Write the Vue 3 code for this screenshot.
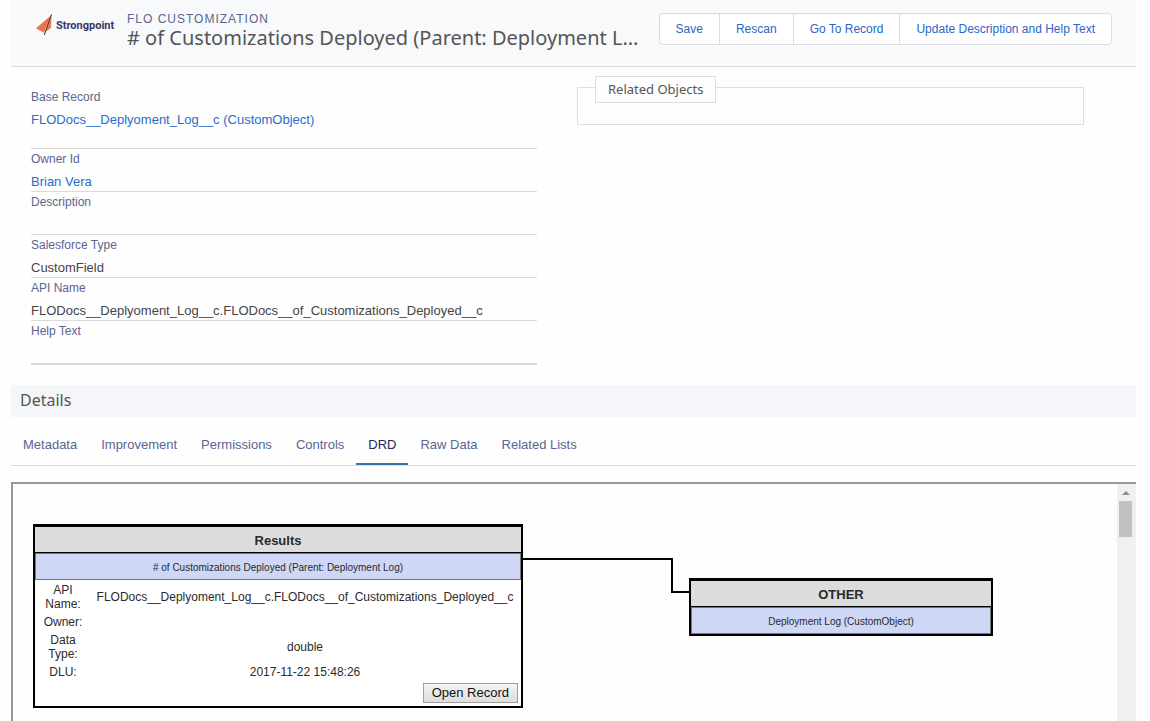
<script setup>
import { ref } from 'vue'

const actions = ['Save', 'Rescan', 'Go To Record', 'Update Description and Help Text']

const fields = [
  { label: 'Base Record', value: 'FLODocs__Deplyoment_Log__c (CustomObject)', link: true, tall: true },
  { label: 'Owner Id', value: 'Brian Vera', link: true },
  { label: 'Description', value: '' },
  { label: 'Salesforce Type', value: 'CustomField' },
  { label: 'API Name', value: 'FLODocs__Deplyoment_Log__c.FLODocs__of_Customizations_Deployed__c' },
  { label: 'Help Text', value: '' },
]

const tabs = ['Metadata', 'Improvement', 'Permissions', 'Controls', 'DRD', 'Raw Data', 'Related Lists']
const activeTab = ref('DRD')

const results = [
  { label: 'API Name:', value: 'FLODocs__Deplyoment_Log__c.FLODocs__of_Customizations_Deployed__c' },
  { label: 'Owner:', value: '' },
  { label: 'Data Type:', value: 'double' },
  { label: 'DLU:', value: '2017-11-22 15:48:26' },
]
</script>

<template>
  <div class="page">
    <header class="header">
      <div class="logo">
        <svg class="logo-mark" viewBox="0 0 18 22" aria-hidden="true">
          <path d="M16.500 1 L1 14.300 L8.800 18.500 Z" fill="#ec7546" />
          <path d="M16.500 1 L16 13.800 L9 19 Z" fill="#e07a52" />
          <path d="M16.500 0.300 L9.300 21" stroke="#4a3440" stroke-width="1" fill="none" />
        </svg>
        <span class="logo-name">Strongpoint</span>
      </div>
      <div class="heading">
        <p class="kicker">FLO CUSTOMIZATION</p>
        <h1 class="title"># of Customizations Deployed (Parent: Deployment L...</h1>
      </div>
      <div class="actions">
        <button v-for="a in actions" :key="a" type="button" class="action">{{ a }}</button>
      </div>
    </header>

    <section class="record">
      <dl class="fields">
        <div v-for="f in fields" :key="f.label" class="field" :class="{ tall: f.tall }">
          <dt>{{ f.label }}</dt>
          <dd>
            <a v-if="f.link" href="#">{{ f.value }}</a>
            <template v-else>{{ f.value }}</template>
          </dd>
        </div>
      </dl>
      <fieldset class="related">
        <legend>Related Objects</legend>
      </fieldset>
    </section>

    <h2 class="section-title">Details</h2>

    <nav class="tabs" role="tablist">
      <button
        v-for="t in tabs"
        :key="t"
        type="button"
        role="tab"
        class="tab"
        :class="{ active: t === activeTab }"
        :aria-selected="t === activeTab"
        @click="activeTab = t"
      >{{ t }}</button>
    </nav>

    <div class="frame">
      <div class="canvas">
        <svg class="connector" width="168" height="36" aria-hidden="true">
          <path d="M0 1 H150 V34 H168" fill="none" stroke="#000" stroke-width="2" />
        </svg>

        <article class="node results">
          <h3>Results</h3>
          <p class="node-sub"># of Customizations Deployed (Parent: Deployment Log)</p>
          <table>
            <tbody>
              <tr v-for="r in results" :key="r.label">
                <th scope="row">{{ r.label }}</th>
                <td>{{ r.value }}</td>
              </tr>
            </tbody>
          </table>
          <div class="node-foot">
            <button type="button" class="open">Open Record</button>
          </div>
        </article>

        <article class="node other">
          <h3>OTHER</h3>
          <p class="node-sub">Deployment Log (CustomObject)</p>
        </article>
      </div>
      <div class="scrollbar" aria-hidden="true">
        <svg class="arrow" viewBox="0 0 8 4"><path d="M4 0 L8 4 H0 Z" fill="#8f8f8f" /></svg>
        <div class="thumb"></div>
      </div>
    </div>
  </div>
</template>

<style>
body {
  margin: 0;
  background: #fefefe;
}
</style>

<style scoped>
.page {
  box-sizing: border-box;
  display: flex;
  flex-direction: column;
  height: 100vh;
  padding: 0 14px 0 11px;
  overflow: hidden;
  font-family: "Liberation Sans", Arial, sans-serif;
  font-size: 13px;
  color: #444;
}
h1, h2, h3, p, dl, dd {
  margin: 0;
  font-weight: 400;
}
button {
  font-family: inherit;
  cursor: pointer;
}
a {
  color: #2a6cc8;
  text-decoration: none;
}

.header {
  flex: none;
  display: flex;
  align-items: flex-start;
  box-sizing: border-box;
  height: 67px;
  padding: 12px 24px 0 24px;
  background: #f7f9fb;
  border-bottom: 1px solid #d9dbe0;
}
.logo {
  flex: none;
  display: flex;
  align-items: center;
  gap: 3px;
  width: 92px;
  padding-top: 2px;
}
.logo-mark {
  width: 18px;
  height: 22px;
}
.logo-name {
  font-family: Roboto, sans-serif;
  font-size: 11px;
  font-weight: 700;
  color: #3a3768;
}
.heading {
  flex: 1;
  min-width: 0;
}
.kicker {
  font-size: 12px;
  line-height: 14px;
  letter-spacing: 1px;
  color: #5b6591;
}
.title {
  white-space: nowrap;
  font-family: "Noto Sans", sans-serif;
  font-size: 20px;
  line-height: 24px;
  color: #555;
}
.actions {
  flex: none;
  display: flex;
  margin-top: 1px;
  background: #fff;
  border: 1px solid #d9dbe0;
  border-radius: 4px;
}
.action {
  height: 30px;
  padding: 0 16px;
  background: none;
  border: 0;
  font-size: 12px;
  color: #2a67c4;
}
.action + .action {
  border-left: 1px solid #d9dbe0;
}

.record {
  flex: none;
  display: grid;
  grid-template-columns: 1fr 1fr;
  gap: 41px;
  padding: 20px 52px 20px 20px;
}
.field {
  box-sizing: border-box;
  height: 43px;
  border-bottom: 1px solid #dddbda;
}
.field.tall {
  height: 62px;
}
.field:last-child {
  height: 44px;
  border-bottom-width: 2px;
}
.field dt {
  padding-top: 2px;
  font-size: 12px;
  line-height: 16px;
  color: #5b6591;
}
.field dd {
  padding-top: 6px;
  line-height: 18px;
}
.related {
  align-self: start;
  box-sizing: border-box;
  height: 38px;
  min-width: 0;
  margin: 0 0 0 -1px;
  padding: 0 17px;
  border: 1px solid #dcdfe0;
}
.related legend {
  float: left;
  margin-top: -12px;
  padding: 0 12px;
  background: #fefefe;
  border: 1px solid #dcdfe0;
  font-family: "Noto Sans", sans-serif;
  font-size: 13px;
  line-height: 25px;
  color: #555;
}

.section-title {
  flex: none;
  height: 32px;
  padding: 0 9px;
  background: #f4f6f9;
  font-family: "Noto Sans", sans-serif;
  font-size: 16px;
  line-height: 30px;
  color: #555;
}
.tabs {
  flex: none;
  display: flex;
  height: 48px;
  border-bottom: 1px solid #d9dbe0;
}
.tab {
  padding: 8px 12px 0;
  background: none;
  border: 0;
  border-bottom: 2px solid transparent;
  font-size: 13px;
  color: #5b6591;
}
.tab.active {
  border-bottom-color: #3a6fae;
  color: #24284e;
}

.frame {
  flex: 1;
  min-height: 0;
  display: flex;
  margin-top: 16px;
  border: 2px solid #989898;
  border-right: 0;
  border-bottom: 0;
}
.canvas {
  position: relative;
  flex: 1;
  overflow: hidden;
}
.connector {
  position: absolute;
  left: 509px;
  top: 74px;
}
.node {
  position: absolute;
  box-sizing: border-box;
  background: #fff;
  border: 2px solid #000;
  border-top-width: 3px;
  text-align: center;
  color: #2a2a2a;
}
.results {
  left: 20px;
  top: 40px;
  width: 490px;
}
.other {
  left: 676px;
  top: 94px;
  width: 304px;
}
.node h3 {
  padding-top: 2px;
  background: #dcdcdc;
  border-bottom: 1px solid #000;
  font-size: 13px;
  font-weight: 700;
  line-height: 23px;
}
.node-sub {
  padding-top: 2px;
  background: #ced7f6;
  border: 1px solid #777;
  font-size: 10px;
  line-height: 23px;
}
.node table {
  width: 100%;
  border-spacing: 2px;
  font-size: 12px;
  line-height: 14px;
}
.node th {
  box-sizing: border-box;
  width: 52px;
  padding: 1px 6px;
  font-weight: 400;
}
.node td {
  padding: 1px;
}
.node-foot {
  display: flex;
  justify-content: flex-end;
  padding: 1px 3px 3px;
}
.open {
  height: 20px;
  padding: 0 8px;
  background: linear-gradient(#f4f4f4, #dedede);
  border: 1px solid #a0a0a0;
  font-size: 13px;
  line-height: 18px;
  color: #111;
}
.scrollbar {
  flex: none;
  display: flex;
  flex-direction: column;
  align-items: center;
  box-sizing: border-box;
  width: 19px;
  padding-right: 2px;
  background: #f0f0f0;
}
.arrow {
  width: 8px;
  height: 4px;
  margin: 7px 0 6px;
}
.thumb {
  width: 13px;
  height: 36px;
  background: #c1c1c1;
}
</style>
